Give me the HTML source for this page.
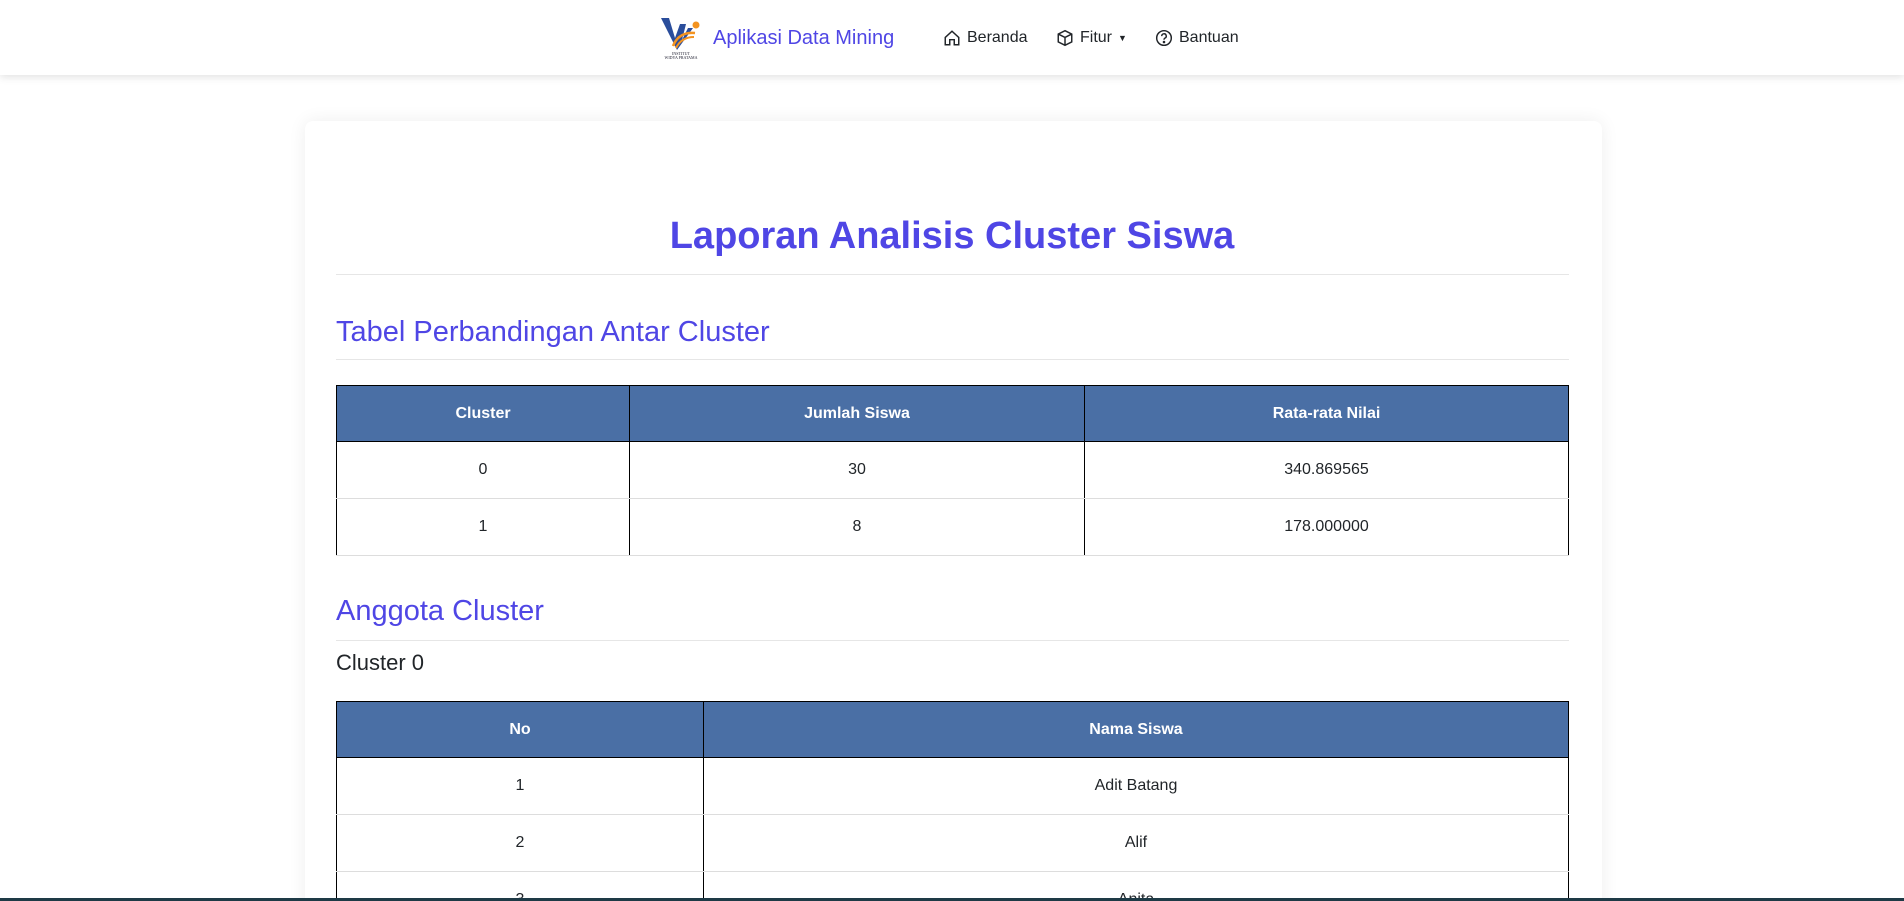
<!DOCTYPE html>
<html><head><meta charset="utf-8">
<style>
*{box-sizing:border-box;margin:0;padding:0}
html,body{width:1904px;height:901px;overflow:hidden}
body{background:#fff;font-family:"Liberation Sans",sans-serif;color:#212529;position:relative}
.nav{position:absolute;left:0;top:0;width:1904px;height:75px;background:#fff;box-shadow:0 2px 8px rgba(0,0,0,.12);z-index:2}
.brand{position:absolute;left:713px;top:27px;font-size:20px;color:#4f46e5}
.item{position:absolute;top:29px;font-size:16px;color:#212529;display:flex;align-items:center;gap:6px}
.card{position:absolute;left:305px;top:121px;width:1297px;height:800px;background:#fff;border-radius:8px;box-shadow:0 0 18px rgba(0,0,0,.07)}
.abs{position:absolute}
h1{position:absolute;left:0;width:1904px;text-align:center;top:215px;font-size:38px;color:#4f46e5;font-weight:bold}
.hr{position:absolute;left:336px;width:1233px;height:1px;background:#e6e6e6}
h3{position:absolute;left:336px;font-weight:normal;color:#4f46e5;font-size:29px}
table{position:absolute;left:336px;width:1233px;border-collapse:collapse;font-size:16px}
th{background:#4a6fa5;color:#fff;font-weight:bold;height:56px;border:1px solid #000;text-align:center}
td{height:57px;text-align:center;border-left:1px solid #000;border-right:1px solid #000;border-bottom:1px solid #ddd}
.bot{position:absolute;left:0;top:898px;width:1904px;height:3px;background:#1e3a46}
</style></head><body>
<div class="nav">
<svg class="abs" style="left:659px;top:16px" width="44" height="44" viewBox="0 0 44 44">
<path d="M2 2h8l6 20 5-14h6l-4 16 6-12h5L18 34z" fill="#2a4d9b"/>
<path d="M14 30c4-10 12-14 22-13" stroke="#f39320" stroke-width="2.5" fill="none"/>
<path d="M17 32c4-8 10-11 18-11" stroke="#f39320" stroke-width="2" fill="none"/>
<circle cx="37" cy="9" r="3.5" fill="#f39320"/>
<text x="22" y="39" font-size="4" text-anchor="middle" fill="#223" font-family="Liberation Serif">INSTITUT</text>
<text x="22" y="43" font-size="4" text-anchor="middle" fill="#223" font-family="Liberation Serif">WIDYA PRATAMA</text>
</svg>
<div class="brand">Aplikasi Data Mining</div>
<div class="item" style="left:943px"><svg width="18" height="18" viewBox="0 0 16 16" fill="none" stroke="#212529" stroke-width="1.3"><path d="M2 7.5L8 2l6 5.5V14H10V9.5H6V14H2z"/></svg>Beranda</div>
<div class="item" style="left:1056px"><svg width="18" height="18" viewBox="0 0 16 16" fill="none" stroke="#212529" stroke-width="1.3"><path d="M8 1.5l6 3v7l-6 3-6-3v-7z M2 4.5l6 3 6-3 M8 7.5v7"/></svg>Fitur <span style="font-size:9px">▼</span></div>
<div class="item" style="left:1155px"><svg width="18" height="18" viewBox="0 0 16 16" fill="none" stroke="#212529" stroke-width="1.3"><circle cx="8" cy="8" r="6.5"/><path d="M6 6.3a2 2 0 1 1 2.8 1.8c-.6.3-.8.7-.8 1.4"/><circle cx="8" cy="11.6" r=".5" fill="#212529"/></svg>Bantuan</div>
</div>
<div class="card"></div>
<h1>Laporan Analisis Cluster Siswa</h1>
<div class="hr" style="top:274px"></div>
<h3 style="top:316px">Tabel Perbandingan Antar Cluster</h3>
<div class="hr" style="top:359px"></div>
<table style="top:385px">
<tr><th style="width:293px">Cluster</th><th style="width:455px">Jumlah Siswa</th><th>Rata-rata Nilai</th></tr>
<tr><td>0</td><td>30</td><td>340.869565</td></tr>
<tr><td>1</td><td>8</td><td>178.000000</td></tr>
</table>
<h3 style="top:595px">Anggota Cluster</h3>
<div class="hr" style="top:640px"></div>
<div class="abs" style="left:336px;top:650px;font-size:22px">Cluster 0</div>
<table style="top:701px">
<tr><th style="width:367px">No</th><th>Nama Siswa</th></tr>
<tr><td>1</td><td>Adit Batang</td></tr>
<tr><td>2</td><td>Alif</td></tr>
<tr><td>3</td><td>Anita</td></tr>
</table>
<div class="bot"></div>
</body></html>
